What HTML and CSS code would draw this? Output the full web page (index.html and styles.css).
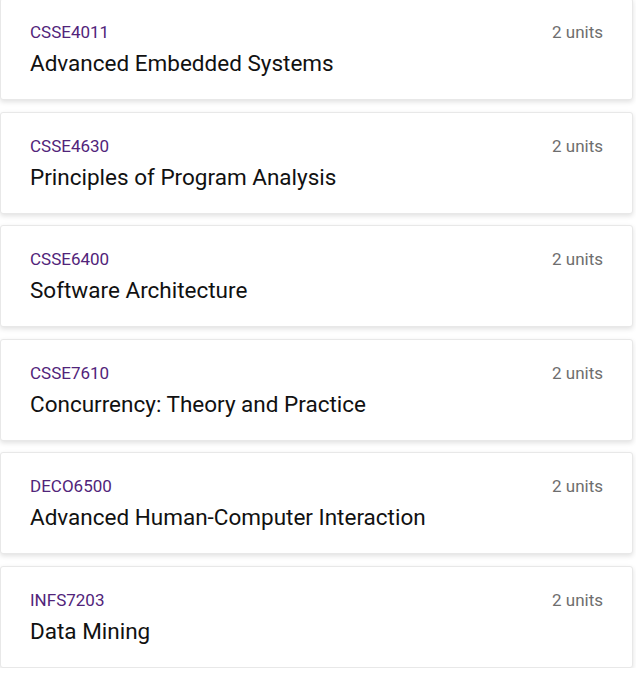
FILE: index.html
```html
<!DOCTYPE html>
<html>
<head>
<meta charset="utf-8">
<link rel="stylesheet" href="styles.css">
</head>
<body>
<div class="list">
  <div class="card"><div class="info"><div class="code">CSSE4011</div><div class="title">Advanced Embedded Systems</div></div><div class="units">2 units</div></div>
  <div class="card"><div class="info"><div class="code">CSSE4630</div><div class="title">Principles of Program Analysis</div></div><div class="units">2 units</div></div>
  <div class="card"><div class="info"><div class="code">CSSE6400</div><div class="title">Software Architecture</div></div><div class="units">2 units</div></div>
  <div class="card"><div class="info"><div class="code">CSSE7610</div><div class="title">Concurrency: Theory and Practice</div></div><div class="units">2 units</div></div>
  <div class="card"><div class="info"><div class="code">DECO6500</div><div class="title">Advanced Human-Computer Interaction</div></div><div class="units">2 units</div></div>
  <div class="card"><div class="info"><div class="code">INFS7203</div><div class="title">Data Mining</div></div><div class="units">2 units</div></div>
</div>
</body>
</html>
```
FILE: styles.css
```css
html, body {
  margin: 0;
  padding: 0;
  background: #ffffff;
}
body {
  font-family: Roboto, "Liberation Sans", sans-serif;
}
.list {
  display: flex;
  flex-direction: column;
  gap: 11.5px;
  width: 633px;
  margin-top: -2px;
}
.card {
  display: flex;
  justify-content: space-between;
  align-items: flex-start;
  height: 102px;
  box-sizing: border-box;
  padding: 21px 29px 0 29px;
  background: #fff;
  border: 1px solid #e8e8e8;
  border-radius: 3px;
  box-shadow: 0 2px 5px rgba(0,0,0,.12);
}
.code {
  font-size: 17px;
  line-height: 24px;
  color: #51247a;
}
.title {
  font-size: 22.5px;
  font-weight: 400;
  line-height: 28px;
  margin-top: 5px;
  color: #111111;
}
.units {
  font-size: 17px;
  line-height: 24px;
  color: #6e6e6e;
}
```
